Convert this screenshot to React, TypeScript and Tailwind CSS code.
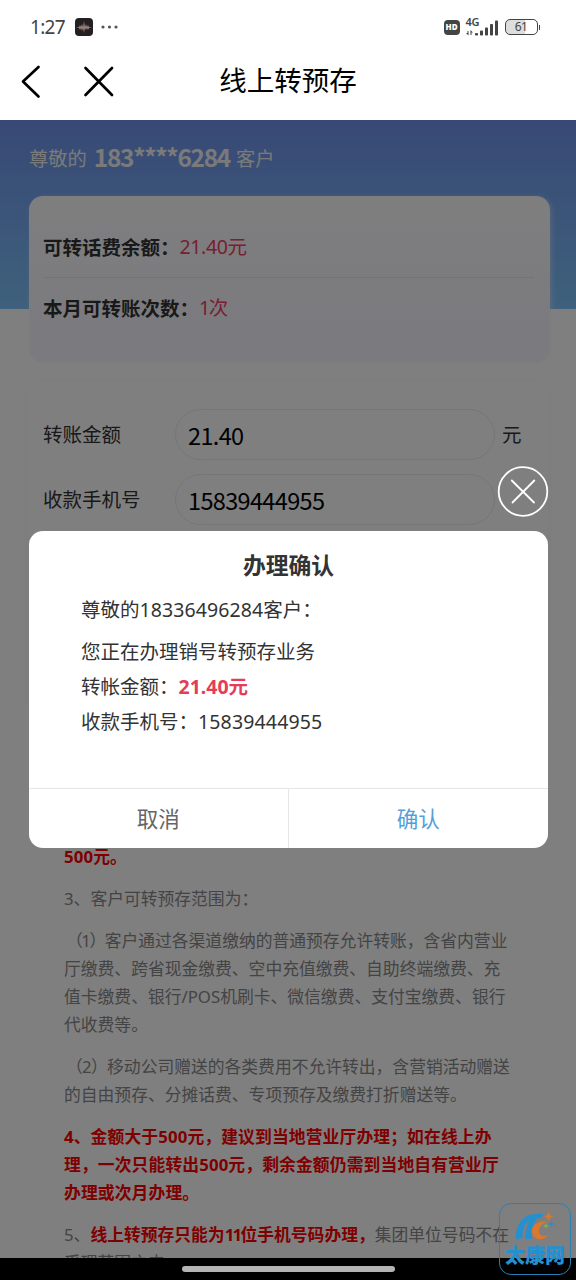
import type { ReactNode } from 'react'

const SANS = "font-['Noto_Sans_CJK_SC',sans-serif]"
// Latin glyphs and digits come from Noto Sans, everything else from the CJK face
const MIXED = "font-['Noto_Sans','Noto_Sans_CJK_SC',sans-serif]"

/**
 * One paragraph of the transfer rules, already split into display lines.
 */
interface Rule {
  id: string
  /** Whether the whole paragraph is highlighted. */
  isStrong?: boolean
  lines: ReactNode[]
}

const RULES: Rule[] = [
  { id: 'limit', isStrong: true, lines: ['500元。'] },
  { id: 'scope', lines: ['3、客户可转预存范围为：'] },
  {
    id: 'scope-1',
    lines: [
      <>
        <span className="ml-[2px] tracking-[-1.500px]">（1）</span>
        客户通过各渠道缴纳的普通预存允许转账，含省内营业
      </>,
      '厅缴费、跨省现金缴费、空中充值缴费、自助终端缴费、充',
      '值卡缴费、银行/POS机刷卡、微信缴费、支付宝缴费、银行',
      '代收费等。',
    ],
  },
  {
    id: 'scope-2',
    lines: [
      <>
        <span className="ml-[2px] tracking-[-0.700px]">（2）</span>
        移动公司赠送的各类费用不允许转出，含营销活动赠送
      </>,
      '的自由预存、分摊话费、专项预存及缴费打折赠送等。',
    ],
  },
  {
    id: 'amount',
    isStrong: true,
    lines: [
      '4、金额大于500元，建议到当地营业厅办理；如在线上办',
      '理，一次只能转出500元，剩余金额仍需到当地自有营业厅',
      '办理或次月办理。',
    ],
  },
  {
    id: 'number',
    lines: [
      <>
        5、
        <b className="font-bold text-[#ff0000]">
          线上转预存只能为<span className="tracking-[-1.700px]">11</span>
          位手机号码办理，
        </b>
        集团单位号码不在
      </>,
      '受理范围之内。',
    ],
  },
]

function StatusBar(): React.JSX.Element {
  return (
    <div className="flex h-[54px] items-center justify-between pr-[36px] pl-[30px] text-[#444]">
      <div className="flex items-center">
        <span className="w-[45px] font-['Noto_Sans',sans-serif] text-[19px] leading-none tracking-[-0.700px]">
          1:27
        </span>
        <svg width="18" height="18" viewBox="0 0 18 18">
          <rect width="18" height="18" rx="4" fill="#241f20" />
          <path d="M1 9h3l1-2 1 2 1-3 1 3 1-6 1 6 1-3 1 3 1-2 1 2h3l-3 1-1 2-1-2-1 2-1-2-1 5-1-5-1 3-1-3-1 2-1-2z" fill="#96827c" />
        </svg>
        <svg className="ml-[8px]" width="18" height="4" viewBox="0 0 18 4" fill="#555">
          <circle cx="2" cy="2" r="1.6" />
          <circle cx="8.500" cy="2" r="1.6" />
          <circle cx="15" cy="2" r="1.6" />
        </svg>
      </div>
      <div className="flex items-center">
        <span className="-ml-px flex h-[15px] w-[16px] items-center justify-center rounded-[4px] bg-[#444] font-['Open_Sans',sans-serif] text-[8px] leading-none font-extrabold text-white">
          HD
        </span>
        <span className="ml-[6px] flex w-[33px] flex-col">
          <span className="h-[9px] font-['Noto_Sans',sans-serif] text-[11px] leading-[8px] font-semibold tracking-[-0.300px]">
            4G
          </span>
          <svg className="-mt-[7px]" width="33" height="16" viewBox="0 0 33 16" fill="#444">
            <path d="M1.500 11h1v4.500L0 13h1.500zM4.500 10l2.500 2.500H5.500V15h-1z" />
            <rect x="9" y="13" width="3" height="2.500" rx=".8" />
            <rect x="14" y="10.500" width="3" height="5" rx=".8" />
            <rect x="19" y="7.500" width="3" height="8" rx=".8" />
            <rect x="24" y="4" width="3" height="11.500" rx=".8" />
            <rect x="29" y="0.500" width="3" height="15" rx=".8" />
          </svg>
        </span>
        <span className="ml-[6px] flex h-[16px] w-[33px] items-center justify-center rounded-[5px] border-[1.500px] border-[#444] bg-linear-to-r from-[#ddd] from-60% to-white to-60% font-['Noto_Sans',sans-serif] text-[12px] leading-none tracking-[-0.500px]">
          61
        </span>
        <span className="ml-px h-[5px] w-[1.500px] bg-[#444]" />
      </div>
    </div>
  )
}

function TitleBar(): React.JSX.Element {
  return (
    <div className="grid h-[66px] grid-cols-[1fr_auto_1fr] items-start text-black">
      <div className="flex gap-[42px] pt-[10px] pl-[20px]">
        <svg width="21" height="36" viewBox="0 0 21 36" fill="none" stroke="currentColor" strokeWidth="2.700" strokeLinecap="round" strokeLinejoin="round">
          <path d="M18.500 3 3 17.500 18.500 32.500" />
        </svg>
        <svg width="32" height="36" viewBox="0 0 32 36" fill="none" stroke="currentColor" strokeWidth="2.700" strokeLinecap="round">
          <path d="M2.500 4 29 31M29 4 2.500 31" />
        </svg>
      </div>
      <h1 className="pt-[6px] text-[27.500px] leading-[38px]">线上转预存</h1>
      <span />
    </div>
  )
}

/**
 * Labelled pill input of the transfer form.
 */
function Field({
  label,
  value,
  unit,
}: {
  label: string
  value: string
  unit?: string
}): React.JSX.Element {
  return (
    <div className="flex h-[51px] items-center text-[19.500px] text-[#333]">
      <span className="w-[132px] pb-[2px]">{label}</span>
      <span className="flex h-[51px] w-[320px] items-center rounded-full border border-[#ececec] pt-[2px] pl-[12px] text-[23.500px] tracking-[-0.650px] text-black">
        {value}
      </span>
      <span className="ml-[7px] pb-[2px]">{unit}</span>
    </div>
  )
}

function Page(): React.JSX.Element {
  return (
    <div className="h-full overflow-hidden bg-white">
      <div className="h-[189px] bg-linear-to-b from-[#7092ea] to-[#7ec2fa] px-[29px] pt-[20px]">
        <p className="flex h-[36px] items-center text-[19.300px] text-[#f4f4f4]">
          尊敬的
          <b className="mr-[6px] ml-[7px] pb-[2px] text-[24.500px] leading-none font-bold tracking-[-1.350px]">
            183****6284
          </b>
          客户
        </p>
        <div className="mt-[20px] h-[166px] w-[521px] rounded-[14px] bg-linear-to-b from-[#fdfdff] to-[#f5f5ff] px-[14px] pt-[20px] text-[19.500px] shadow-[2px_1px_5px_#f4f4ff66]">
          <p className="mr-[2px] flex h-[62px] items-center border-b border-[#e6e6ec]">
            <b className="font-bold text-[#333]">可转话费余额：</b>
            <span className={`${MIXED} tracking-[-0.350px] text-[#f0405f]`}>
              21.40元
            </span>
          </p>
          <p className="flex h-[59px] items-center">
            <b className="font-bold text-[#333]">本月可转账次数：</b>
            <span className={`${MIXED} tracking-[-1.500px] text-[#f0405f]`}>
              1次
            </span>
          </p>
        </div>
      </div>
      <div className="mx-[28px] mt-[72px] h-[330px] rounded-[14px] pt-[28px] pl-[15px] shadow-[0_0_8px_#0000000a]">
        <Field label="转账金额" value="21.40" unit="元" />
        <div className="h-[14px]" />
        <Field label="收款手机号" value="15839444955" />
      </div>
      <div className={`mt-[132px] flex flex-col gap-[14px] pl-[64px] text-[16.800px] leading-[28px] whitespace-nowrap text-[#888] ${MIXED}`}>
        {RULES.map((rule) => (
          <div
            key={rule.id}
            className={
              rule.isStrong ? 'font-bold tracking-[0.120px] text-[#ff0000]' : ''
            }
          >
            {rule.lines.map((line, i) => (
              <p key={i} className="h-[28px]">
                {line}
              </p>
            ))}
          </div>
        ))}
      </div>
    </div>
  )
}

function ConfirmModal(): React.JSX.Element {
  return (
    <div className="absolute inset-0 flex flex-col bg-black/50 pt-[345px]">
      <svg className="ml-[497px]" width="52" height="52" viewBox="0 0 52 52" fill="none" stroke="#fff" strokeWidth="1.800" strokeLinecap="round">
        <circle cx="26" cy="26.500" r="24.300" />
        <path d="M14.800 15.500 37 37.500M37.300 15.500 15.500 37.500" />
      </svg>
      <div className="mt-[14px] ml-[29px] flex h-[317px] w-[519px] flex-col rounded-[14px] bg-white text-[#333]">
        <h2 className="pt-[17px] text-center text-[22.800px] leading-[34px] font-bold">
          办理确认
        </h2>
        <div className={`flex-1 pt-[10px] pl-[52px] text-[19.500px] leading-[35px] ${MIXED}`}>
          <p className="h-[35px]">
            尊敬的<span className="tracking-[0.100px]">18336496284</span>客户：
          </p>
          <p className="mt-[7px] h-[35px]">您正在办理销号转预存业务</p>
          <p className="h-[35px]">
            转帐金额：<b className="font-bold text-[#e53c58]">21.40元</b>
          </p>
          <p className="h-[35px]">
            收款手机号：<span className="tracking-[0.150px]">15839444955</span>
          </p>
        </div>
        <div className="grid h-[60px] grid-cols-2 border-t border-[#e6e6e6] text-[21.500px]">
          <button type="button" className="border-r border-[#e6e6e6] text-[#666]">
            取消
          </button>
          <button type="button" className="text-[#559fd9]">
            确认
          </button>
        </div>
      </div>
    </div>
  )
}

function Watermark(): React.JSX.Element {
  return (
    <div className="absolute top-[1203px] left-[499px] flex h-[72px] w-[72px] flex-col items-center rounded-[12px] border border-[#2a7fb5] pt-[8px]">
      <svg width="42" height="30" viewBox="0 0 42 30">
        <path d="M2 28C1 13 9 2 22 2h7c0 2-1 3.500-3 4h-5C12 8 8 16 8.500 26z" fill="#2590d0" />
        <path d="M18.500 5h6.500c-6 5-8 12-7 22h-6.500c0-9 2-17 7-22z" fill="#2590d0" />
        <path d="M33 10c-9-2-16 4-15 10 1 8 11 10 16 3-4 2-9 1-9-4 0-4 3-8 8-9z" fill="#d9792f" />
        <path d="M34.500 0l1.200 3.300L39 4.500l-3.300 1.200L34.500 9l-1.200-3.300L30 4.500l3.300-1.200z" fill="#d9792f" />
        <path d="M37.500 8.500l.9 2.600 2.600.9-2.600.9-.9 2.600-.9-2.600-2.600-.9 2.600-.9z" fill="#2590d0" />
        <path d="M32 11l.8 2.200 2.200.8-2.200.8-.8 2.200-.8-2.200-2.200-.8 2.200-.8z" fill="#7cb83f" />
      </svg>
      <span className="mt-[3px] text-[20px] leading-[20px] font-black whitespace-nowrap text-[#2590d0]">
        太康网
      </span>
    </div>
  )
}

export default function App(): React.JSX.Element {
  return (
    <div className={`relative flex h-[1280px] w-[576px] flex-col overflow-hidden bg-white ${SANS}`}>
      <header className="h-[120px] shrink-0">
        <StatusBar />
        <TitleBar />
      </header>
      <main className="relative h-[1138px] shrink-0 overflow-hidden">
        <Page />
        <ConfirmModal />
      </main>
      <footer className="flex h-[22px] justify-center bg-black pt-[8px]">
        <span className="h-[6px] w-[213px] rounded-full bg-[#b4b4b4]" />
      </footer>
      <Watermark />
    </div>
  )
}
